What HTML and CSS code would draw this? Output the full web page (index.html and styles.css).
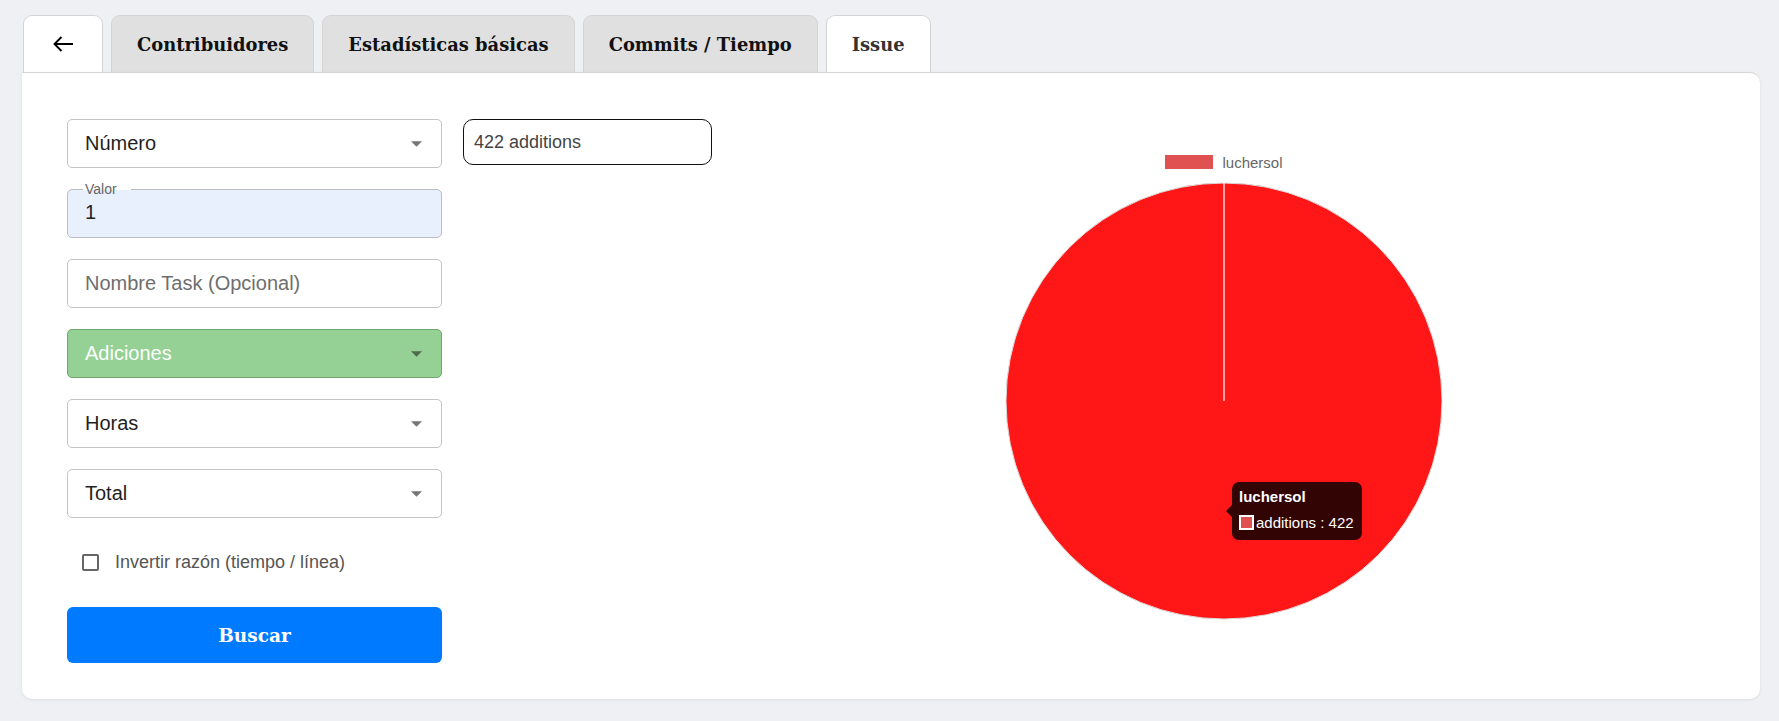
FILE: index.html
```html
<!DOCTYPE html>
<html lang="es">
<head>
<meta charset="utf-8">
<title>Issue</title>
<link rel="stylesheet" href="styles.css">
</head>
<body>
<div class="page">
  <nav class="tabs">
    <button class="tab tab-back active" aria-label="Volver">
      <svg width="22" height="18" viewBox="0 0 22 18"><path d="M21 9H2.5M9.5 2L2.5 9l7 7" fill="none" stroke="#000" stroke-width="1.9"/></svg>
    </button>
    <button class="tab">Contribuidores</button>
    <button class="tab">Estadísticas básicas</button>
    <button class="tab">Commits / Tiempo</button>
    <button class="tab active">Issue</button>
  </nav>
  <main class="panel">
    <form class="filters">
      <div class="field select"><span class="value">Número</span><svg class="caret" viewBox="0 0 10 5"><path d="M0 0l5 5 5-5z"/></svg></div>
      <div class="field filled"><span class="float-label">Valor</span><span class="value">1</span></div>
      <div class="field"><span class="placeholder">Nombre Task (Opcional)</span></div>
      <div class="field select green"><span class="value">Adiciones</span><svg class="caret" viewBox="0 0 10 5"><path d="M0 0l5 5 5-5z"/></svg></div>
      <div class="field select"><span class="value">Horas</span><svg class="caret" viewBox="0 0 10 5"><path d="M0 0l5 5 5-5z"/></svg></div>
      <div class="field select"><span class="value">Total</span><svg class="caret" viewBox="0 0 10 5"><path d="M0 0l5 5 5-5z"/></svg></div>
      <label class="check"><span class="box"></span>Invertir razón (tiempo / línea)</label>
      <button type="button" class="search">Buscar</button>
    </form>
    <div class="summary">422 additions</div>
    <section class="chart">
      <div class="legend"><span class="swatch"></span><span>luchersol</span></div>
      <div class="pie-wrap">
        <svg class="pie" width="440" height="440" viewBox="0 0 440 440">
          <circle cx="220" cy="220" r="218" fill="#ff1717" stroke="#dcdcdc" stroke-width="1"/>
          <line x1="220" y1="2" x2="220" y2="220" stroke="#fff" stroke-width="1.2"/>
        </svg>
        <div class="tooltip">
          <div class="tt-title">luchersol</div>
          <div class="tt-body"><span class="tt-swatch"></span>additions : 422</div>
        </div>
      </div>
    </section>
  </main>
</div>
</body>
</html>
```

FILE: styles.css
```css
* { box-sizing: border-box; }
html, body { margin: 0; padding: 0; }
body {
  background: #eff0f4;
  font-family: "Liberation Sans", Arial, sans-serif;
  color: #1a1a1a;
}
.page {
  padding: 15px 19px 22px 22px;
  height: 721px;
  display: flex;
  flex-direction: column;
}
.tabs {
  display: flex;
  gap: 8px;
  padding-left: 1px;
  height: 57px;
}
.tab {
  height: 57px;
  padding: 0 25px;
  border: 1px solid #d4d4d4;
  border-bottom: none;
  border-radius: 9px 9px 0 0;
  background: #e0e0e0;
  font-family: "DejaVu Serif", serif;
  font-weight: bold;
  font-size: 17.9px;
  color: #111;
  display: flex;
  align-items: center;
  justify-content: center;
  cursor: pointer;
}
.tab.active { background: #fff; color: #333; }
.tab-back { width: 80px; padding: 0; }
.panel {
  flex: 1;
  background: #fff;
  border-top: 1px solid #d6d6d6;
  border-radius: 0 10px 10px 10px;
  box-shadow: 0 1px 3px rgba(0,0,0,0.08);
  padding: 46px 45px 36px 45px;
  display: flex;
  align-items: flex-start;
}
.filters {
  width: 375px;
  display: flex;
  flex-direction: column;
  flex: none;
}
.field {
  position: relative;
  height: 49px;
  border: 1px solid #c4c4c4;
  border-radius: 5px;
  margin-bottom: 21px;
  padding: 0 17px;
  display: flex;
  align-items: center;
  font-size: 20px;
  background: #fff;
}
.field .value { color: #1f1f1f; }
.field .placeholder { color: #6e6e6e; }
.field .caret {
  position: absolute;
  right: 19px;
  top: 21px;
  width: 11px;
  height: 6px;
  fill: #757575;
}
.field.filled { background: #e8f0fe; border-color: #bcbcbc; }
.float-label {
  position: absolute;
  left: 15px;
  top: -9px;
  padding: 0 14px 0 2px;
  font-size: 14px;
  line-height: 16px;
  color: #666;
  background: linear-gradient(#fff 0 9px, #e8f0fe 9px);
}
.field.filled .value { padding-bottom: 2px; }
.field.green { background: #95d095; border-color: #6ea86e; }
.field.green .value { color: #fbfffb; }
.field.green .caret { fill: #4c6a4c; }
.check {
  display: flex;
  align-items: center;
  height: 45px;
  margin: 1px 0 22px 0;
  padding-left: 15px;
  font-size: 18px;
  color: #555;
}
.check .box {
  width: 17px;
  height: 17px;
  border: 2px solid #666;
  border-radius: 2px;
  margin-right: 16px;
}
.search {
  height: 56px;
  border: none;
  border-radius: 6px;
  background: #007bff;
  color: #fff;
  font-family: "DejaVu Serif", serif;
  font-weight: bold;
  font-size: 18.5px;
  cursor: pointer;
}
.summary {
  margin-left: 21px;
  width: 249px;
  height: 46px;
  border: 1px solid #111;
  border-radius: 10px;
  padding-left: 10px;
  display: flex;
  align-items: center;
  font-size: 18px;
  color: #444;
  flex: none;
}
.chart {
  flex: 1;
  margin-left: 21px;
  display: flex;
  flex-direction: column;
  align-items: center;
}
.legend {
  margin-top: 36px;
  display: flex;
  align-items: center;
  height: 14px;
  font-size: 15px;
  color: #666;
}
.legend .swatch {
  width: 48px;
  height: 14px;
  background: #e05252;
  margin-right: 9px;
}
.pie-wrap {
  position: relative;
  margin-top: 12px;
  width: 440px;
  height: 440px;
}
.pie { display: block; }
.tooltip {
  position: absolute;
  left: 228px;
  top: 301px;
  width: 130px;
  height: 58px;
  background: rgba(0,0,0,0.8);
  border-radius: 7px;
  padding: 6px 7px;
  color: #fff;
  font-size: 15px;
}
.tooltip::before {
  content: "";
  position: absolute;
  left: -6px;
  top: 23px;
  border-style: solid;
  border-width: 6px 6px 6px 0;
  border-color: transparent rgba(0,0,0,0.8) transparent transparent;
}
.tt-title { font-weight: bold; line-height: 17px; margin-bottom: 9px; }
.tt-body { display: flex; align-items: center; line-height: 17px; }
.tt-swatch {
  width: 15px;
  height: 15px;
  background: #e05252;
  border: 2px solid #fff;
  margin-right: 2px;
}
```
